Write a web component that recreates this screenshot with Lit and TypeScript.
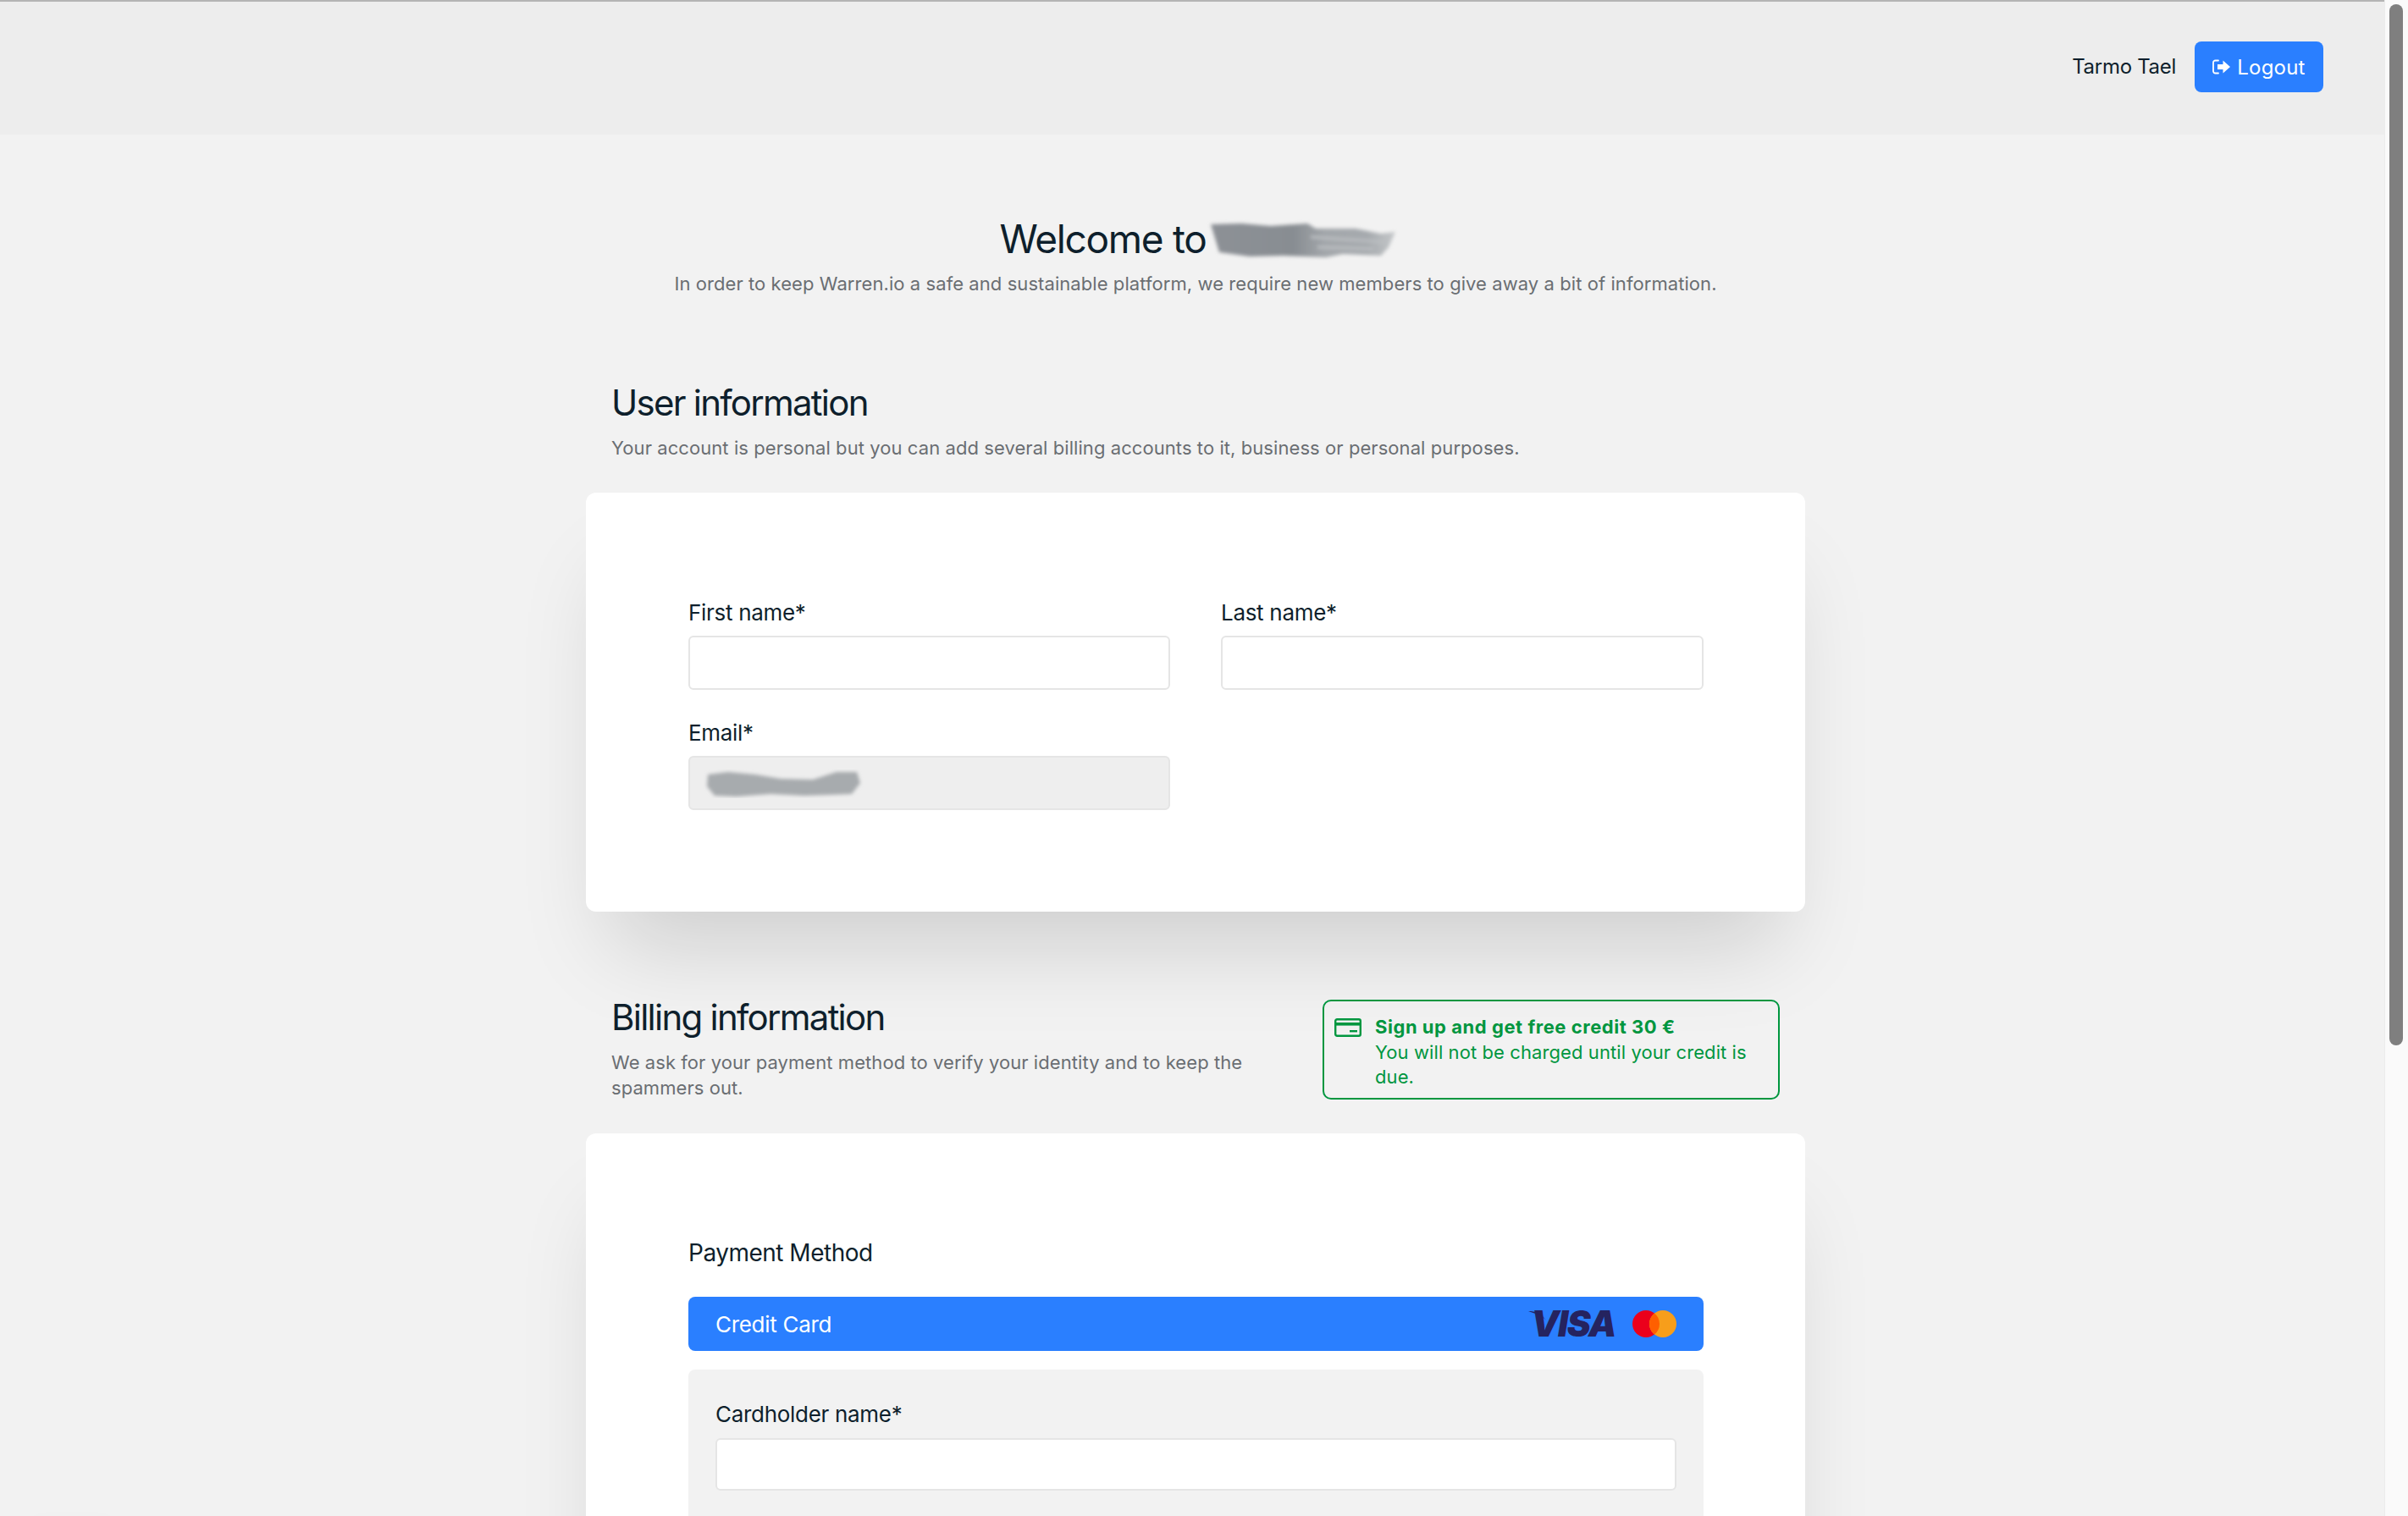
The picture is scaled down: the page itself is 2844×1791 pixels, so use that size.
import { LitElement, html, css } from "lit";
import { customElement } from "lit/decorators.js";

@customElement("app-root")
export class AppRoot extends LitElement {
  static styles = css`
    :host { display: block; height: 100vh; overflow: hidden; position: relative; background: #f2f2f2; font-family: Inter, "Liberation Sans", sans-serif; color: #0e1f2c; font-size: 24px; }
    * { box-sizing: border-box; }
    .nav { height: 159px; background: #ededed; border-top: 2px solid #b4b4b4; display: flex; justify-content: flex-end; align-items: center; gap: 22px; padding-right: 100px; padding-bottom: 3px; }
    .user { font-size: 24px; line-height: 32px; letter-spacing: -0.3px; }
    .btn { width: 152px; height: 60px; background: #2a7fff; color: #fff; border-radius: 8px; display: flex; align-items: center; justify-content: center; gap: 8px; font-size: 24px; letter-spacing: 0.2px; }
    .btn svg { width: 21px; height: 18px; }
    .page { padding-right: 20px; }
    .wrap { width: 1440px; margin: 0 auto; }
    .intro { text-align: center; padding-top: 91px; }
    h1 { margin: 0; font-weight: 400; font-size: 46px; line-height: 64px; letter-spacing: -1.3px; display: flex; justify-content: center; align-items: center; gap: 1px; }
    .smudge { display: block; width: 218px; height: 56px; margin-top: 3px; overflow: visible; }
    .intro p { margin: 6px 0 0; }
    .muted { color: #6a6e72; font-size: 22px; line-height: 30px; letter-spacing: 0.07px; }
    .sec { padding: 0 30px; }
    h2 { margin: 0; font-weight: 400; font-size: 42px; line-height: 60px; letter-spacing: -1.75px; }
    .sec p { margin: 8px 0 0; }
    .first { margin-top: 96px; }
    .card { background: #fff; border-radius: 12px; box-shadow: 0 70px 100px -30px rgba(0,0,0,.15); padding: 120px 120px 120px 121px; }
    .c1 { height: 495px; margin-top: 38px; padding-top: 123px; }
    .grid { display: grid; grid-template-columns: 569px 570px; column-gap: 60px; row-gap: 0; }
    .field { display: flex; flex-direction: column; }
    label { font-size: 26px; line-height: 32px; height: 46px; padding-top: 3px; letter-spacing: -0.3px; }
    .input { height: 64px; background: #fff; border: 2px solid #e5e5e5; border-radius: 6px; margin-bottom: 32px; position: relative; }
    .input.dis { background: #eeeeee; }
    .mail { position: absolute; left: 15px; top: 14px; width: 190px; height: 34px; }
    .bill { display: flex; justify-content: space-between; align-items: flex-start; margin-top: 90px; }
    .bill .txt { width: 770px; padding-top: 5px; }
    .alert { width: 540px; height: 118px; margin-top: 14px; border: 2px solid #00963f; border-radius: 10px; display: flex; color: #00963f; font-size: 22px; line-height: 29.5px; padding: 16px 12px; gap: 16px; letter-spacing: 0.09px; }
    .alert svg { width: 32px; height: 22px; flex: none; margin-top: 4px; }
    .alert b { font-weight: 700; display: block; letter-spacing: 0.54px; }
    .c2 { margin-top: 39px; height: 700px; padding-top: 121px; }
    .pm { font-size: 28px; line-height: 40px; letter-spacing: -0.5px; }
    .bar { height: 64px; margin-top: 32px; background: #2a7fff; color: #fff; border-radius: 8px; display: flex; align-items: center; padding: 0 32px; font-size: 26px; letter-spacing: -0.3px; }
    .visa { margin-left: auto; position: relative; color: #25235f; font-style: italic; font-weight: 900; font-size: 42px; letter-spacing: -1.5px; line-height: 42px; }
    .swoosh { position: absolute; left: -3px; top: 5px; width: 22px; height: 14px; }
    .mc { margin-left: 20px; width: 52px; height: 32px; display: block; }
    .panel { margin-top: 22px; background: #f2f2f2; border-radius: 8px; padding: 35px 32px; height: 400px; }
    .panel label { padding-top: 2px; }
    .panel .input { height: 62px; }
    .scroll { position: absolute; top: 0; right: 0; bottom: 0; width: 28px; background: #fafafa; border-left: 1px solid #ececec; }
    .thumb { position: absolute; top: 5px; left: 5px; width: 16px; height: 1230px; border-radius: 8px; background: #7f7f7f; }
    .ghost { position: absolute; left: 40px; bottom: -30px; width: 90px; height: 20px; box-shadow: 0 0 24px rgba(0,0,0,.04); }
  `;

  render() {
    return html`
      <div class="nav">
        <span class="user">Tarmo Tael</span>
        <div class="btn">
          <svg viewBox="0 0 21 18"><path d="M7 1.5H3.5A2.5 2.5 0 0 0 1 4v10a2.5 2.5 0 0 0 2.5 2.5H7" fill="none" stroke="#fff" stroke-width="1.8" stroke-linecap="round"/><path d="M6 6h6.5V1.5L21 9l-8.500 7.500V12H6z" fill="#fff"/></svg>
          Logout
        </div>
      </div>
      <div class="page"><div class="wrap">
        <div class="intro">
          <h1>Welcome to
            <svg class="smudge" viewBox="0 0 218 56">
              <defs>
                <linearGradient id="g1" x1="0" x2="1" y1="0" y2="0">
                  <stop offset="0" stop-color="#8d9196"/>
                  <stop offset=".45" stop-color="#888d92"/>
                  <stop offset=".62" stop-color="#a3a7ab"/>
                  <stop offset=".85" stop-color="#a6aaae"/>
                  <stop offset="1" stop-color="#c5c8ca"/>
                </linearGradient>
                <filter id="b1" x="-10%" y="-30%" width="120%" height="160%"><feGaussianBlur stdDeviation="2.2"/></filter>
              </defs>
              <g filter="url(#b1)">
                <path d="M4 9 L40 8 L75 11 L118 8 L128 14 L175 14 L205 20 L222 18 L214 36 L205 46 L160 44 L140 48 L90 46 L50 47 L14 42 Z" fill="url(#g1)"/>
                <path d="M122 24 L210 30 M130 36 L196 38" stroke="#bcbfc2" stroke-width="3" fill="none"/>
              </g>
            </svg>
          </h1>
          <p class="muted">In order to keep Warren.io a safe and sustainable platform, we require new members to give away a bit of information.</p>
        </div>
        <div class="sec first">
          <h2>User information</h2>
          <p class="muted">Your account is personal but you can add several billing accounts to it, business or personal purposes.</p>
        </div>
        <div class="card c1">
          <div class="grid">
            <div class="field"><label>First name*</label><div class="input"></div></div>
            <div class="field"><label>Last name*</label><div class="input"></div></div>
            <div class="field"><label>Email*</label>
              <div class="input dis">
                <svg class="mail" viewBox="0 0 190 34">
                  <defs><filter id="b2" x="-10%" y="-50%" width="120%" height="200%"><feGaussianBlur stdDeviation="2"/></filter></defs>
                  <g filter="url(#b2)" fill="#a7abae">
                    <path d="M6 6 L30 3 L62 6 L92 11 L130 12 L158 3 L182 3 L186 16 L176 29 L150 30 L120 31 L80 29 L40 32 L14 31 L5 20 Z"/>
                  </g>
                </svg>
              </div>
            </div>
          </div>
        </div>
        <div class="sec bill">
          <div class="txt">
            <h2>Billing information</h2>
            <p class="muted">We ask for your payment method to verify your identity and to keep the spammers out.</p>
          </div>
          <div class="alert">
            <svg viewBox="0 0 32 22"><rect x="1.200" y="1.200" width="29.600" height="19.600" rx="2" fill="none" stroke="#00963f" stroke-width="2.400"/><rect x="1" y="5" width="30" height="3.600" fill="#00963f"/><rect x="18" y="14" width="9" height="2.400" fill="#00963f"/></svg>
            <div><b>Sign up and get free credit 30 €</b>You will not be charged until your credit is due.</div>
          </div>
        </div>
        <div class="card c2">
          <div class="pm">Payment Method</div>
          <div class="bar">
            Credit Card
            <span class="visa">VISA<svg class="swoosh" viewBox="0 0 22 14"><path d="M0 1 C8 1 15 3 21 12 C17 7 12 4 7 3.500 Z" fill="#25235f"/></svg></span>
            <svg class="mc" viewBox="0 0 52 32">
              <circle cx="16" cy="16" r="16" fill="#eb001b"/>
              <circle cx="36" cy="16" r="16" fill="#f79e1b"/>
              <path d="M26 3.500a16 16 0 0 1 0 25a16 16 0 0 1 0-25z" fill="#ff5f00"/>
            </svg>
          </div>
          <div class="panel">
            <div class="field"><label>Cardholder name*</label><div class="input"></div></div>
          </div>
        </div>
      </div></div>
      <div class="ghost"></div>
      <div class="scroll"><div class="thumb"></div></div>
    `;
  }
}
